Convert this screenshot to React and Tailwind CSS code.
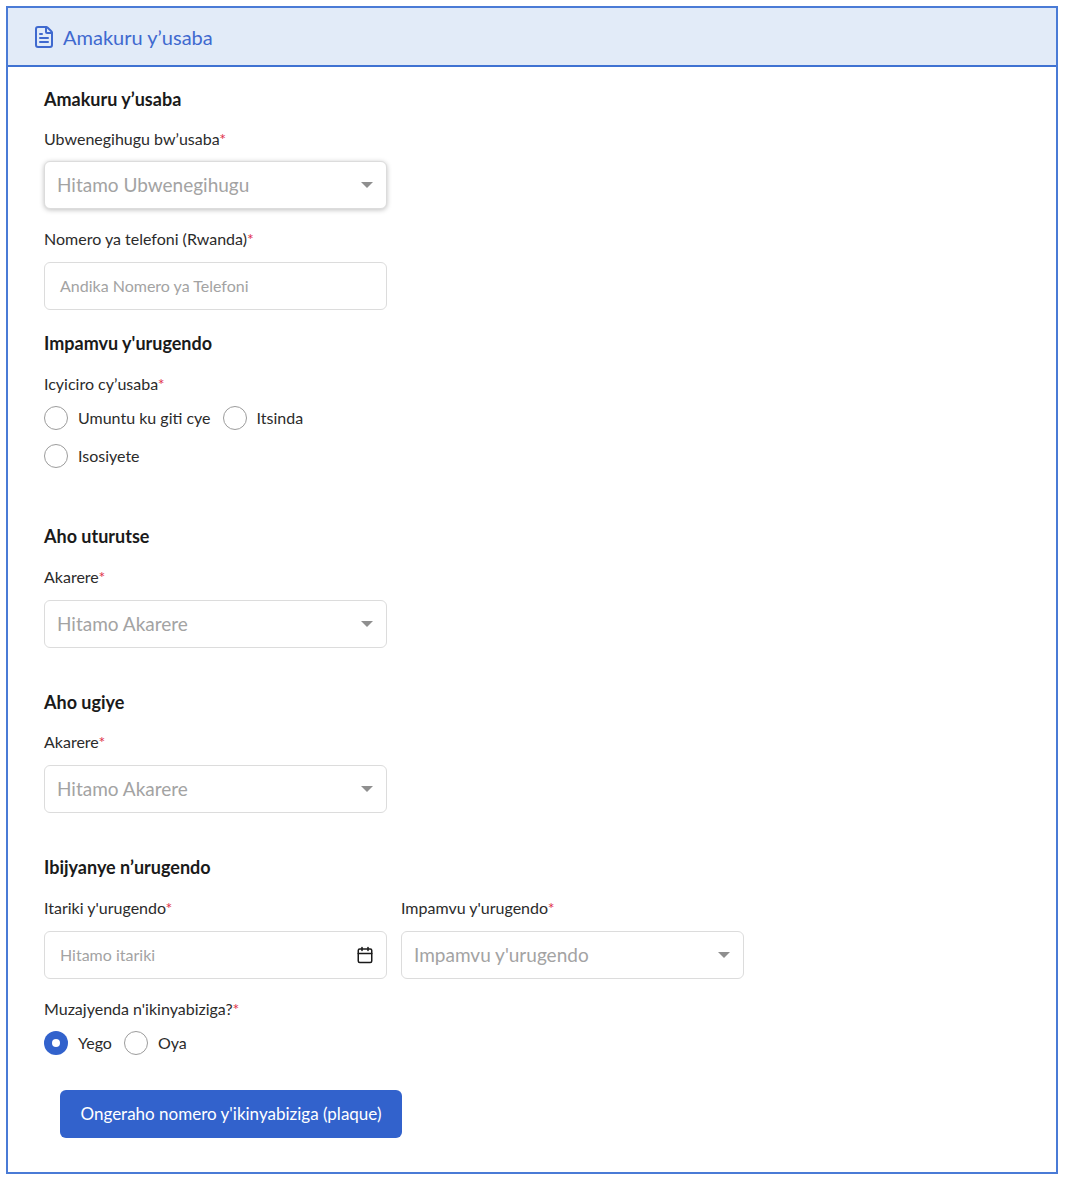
import { FileText, Calendar } from 'lucide-react';

const font = { };

const Heading = ({ children, className = '' }) => (
    <h2 className={`h-6 text-[18px] leading-6 font-bold text-[#1a1a1a] ${className}`}>{children}</h2>
);

const Label = ({ children, className = '' }) => (
    <p className={`h-6 text-[16px] leading-6 text-[#2b2b2b] ${className}`}>
        {children}
        <span className="text-[#e0314b]">*</span>
    </p>
);

const Select = ({ placeholder, className = '' }) => (
    <div className={`flex h-12 w-[343px] items-center justify-between rounded-md border border-[#dcdcdc] bg-white pl-3 pr-[13px] ${className}`}>
        <span className="text-[19px] text-[#a3a3a3]">{placeholder}</span>
        <span className="h-0 w-0 border-x-[6px] border-t-[6px] border-x-transparent border-t-[#8f8f8f]"></span>
    </div>
);

const Radio = ({ label, checked }) => (
    <div className="flex items-center">
        {checked ? (
            <span className="flex h-6 w-6 items-center justify-center rounded-full bg-[#3262cc]">
                <span className="h-2 w-2 rounded-full bg-white"></span>
            </span>
        ) : (
            <span className="h-6 w-6 rounded-full border border-[#9c9c9c] bg-white"></span>
        )}
        <span className="ml-[10px] text-[16px] leading-6 text-[#2b2b2b]">{label}</span>
    </div>
);

export default function App() {
    return (
        <div className="h-[1188px] w-[1070px] bg-white p-[6px] font-['Lato','Noto_Sans',sans-serif]">
            <div className="h-[1168px] w-[1052px] border-2 border-[#4a7bd6]">
                <div className="flex h-[59px] items-center border-b-2 border-[#3f72d2] bg-[#e2ebf8] pl-[24px] text-[#3f69cf]">
                    <FileText size={24} strokeWidth={2} />
                    <span className="ml-[7px] text-[20px]">Amakuru y’usaba</span>
                </div>

                <div className="flex flex-col items-start pl-[36px] pt-5">
                    <Heading>Amakuru y’usaba</Heading>
                    <Label className="mt-4">Ubwenegihugu bw’usaba</Label>
                    <Select placeholder="Hitamo Ubwenegihugu" className="mt-[10px] shadow-[0_1px_5px_rgba(0,0,0,0.25)]" />
                    <Label className="mt-[18px]">Nomero ya telefoni (Rwanda)</Label>
                    <div className="mt-[11px] flex h-12 w-[343px] items-center rounded-md border border-[#dcdcdc] pl-[15px] text-[16px] text-[#a3a3a3]">
                        Andika Nomero ya Telefoni
                    </div>

                    <Heading className="mt-[21px]">Impamvu y'urugendo</Heading>
                    <Label className="mt-[17px]">Icyiciro cy’usaba</Label>
                    <div className="mt-[10px] flex gap-3">
                        <Radio label="Umuntu ku giti cye" />
                        <Radio label="Itsinda" />
                    </div>
                    <div className="mt-[14px]">
                        <Radio label="Isosiyete" />
                    </div>

                    <Heading className="mt-14">Aho uturutse</Heading>
                    <Label className="mt-[17px]">Akarere</Label>
                    <Select placeholder="Hitamo Akarere" className="mt-[11px]" />

                    <Heading className="mt-[42px]">Aho ugiye</Heading>
                    <Label className="mt-4">Akarere</Label>
                    <Select placeholder="Hitamo Akarere" className="mt-[11px]" />

                    <Heading className="mt-[42px]">Ibijyanye n’urugendo</Heading>
                    <div className="mt-[17px] flex gap-[14px]">
                        <div className="w-[343px]">
                            <Label>Itariki y'urugendo</Label>
                            <div className="mt-[11px] flex h-12 items-center justify-between rounded-md border border-[#dcdcdc] pl-[15px] pr-3 text-[16px] text-[#a3a3a3]">
                                Hitamo itariki
                                <Calendar size={18} strokeWidth={2} className="text-[#1a1a1a]" />
                            </div>
                        </div>
                        <div className="w-[343px]">
                            <Label>Impamvu y'urugendo</Label>
                            <Select placeholder="Impamvu y'urugendo" className="mt-[11px]" />
                        </div>
                    </div>

                    <Label className="mt-[18px]">Muzajyenda n'ikinyabiziga?</Label>
                    <div className="mt-[10px] flex gap-3">
                        <Radio label="Yego" checked />
                        <Radio label="Oya" />
                    </div>

                    <button className="ml-4 mt-[35px] h-12 w-[342px] rounded-md bg-[#3262cc] text-[17px] text-white">
                        Ongeraho nomero y'ikinyabiziga (plaque)
                    </button>
                </div>
            </div>
        </div>
    );
}
